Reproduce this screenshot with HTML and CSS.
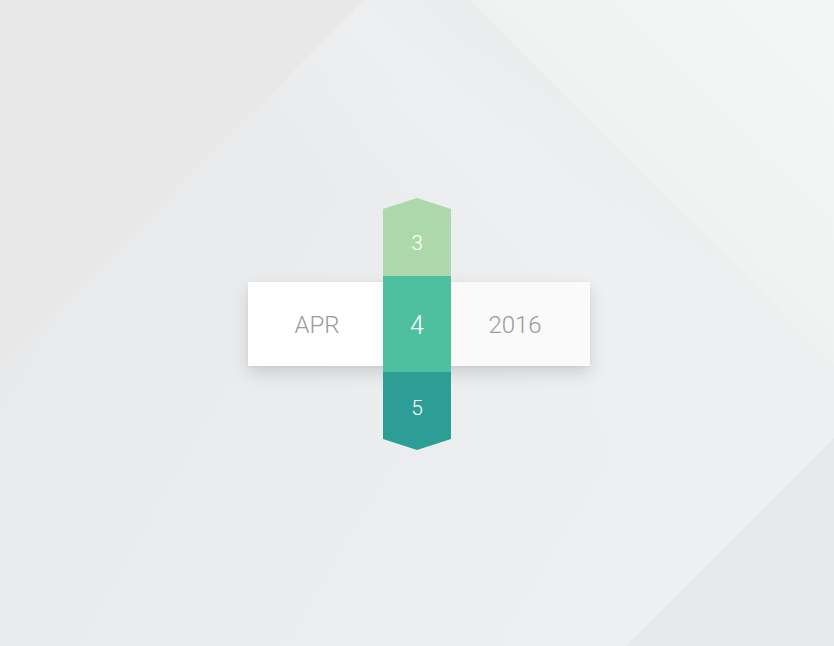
FILE: index.html
```html
<!DOCTYPE html>
<html lang="en">
<head>
<meta charset="utf-8">
<title>Date picker</title>
<link rel="stylesheet" href="styles.css">
</head>
<body>
<main class="stage">
  <div class="picker">
    <div class="panel panel-month"><span class="label">APR</span></div>
    <div class="day-column">
      <div class="cell cell-prev"><span>3</span></div>
      <div class="cell cell-current"><span>4</span></div>
      <div class="cell cell-next"><span>5</span></div>
    </div>
    <div class="panel panel-year"><span class="label">2016</span></div>
  </div>
</main>
</body>
</html>
```
FILE: styles.css
```css
html, body {
  margin: 0;
  padding: 0;
}

body {
  width: 834px;
  height: 646px;
  overflow: hidden;
  font-family: Roboto, "Noto Sans", "Liberation Sans", sans-serif;
  font-weight: 300;
  background:
    linear-gradient(135deg, #e8e8e8 258px, rgba(232,232,232,0) 258px),
    linear-gradient(135deg, rgba(232,233,235,0) 899px, #e8e9eb 899px),
    linear-gradient(45deg, rgba(242,243,243,0) 789px, #f0f1f1 789px, #f4f5f5 1000px),
    linear-gradient(45deg, rgba(239,240,241,0) 560px, rgba(239,240,241,0.8) 700px, rgba(239,240,241,0) 789px),
    linear-gradient(120deg, #e8e9ea 10%, #ebeced 45%, #eeeff0 80%);
}

.stage {
  width: 834px;
  height: 646px;
  display: flex;
  align-items: center;
  justify-content: center;
}

.picker {
  display: flex;
  align-items: center;
  height: 84px;
  margin-left: 4px;
  margin-top: 2px;
  box-shadow: 0 7px 16px rgba(0, 0, 0, 0.13), 0 1px 3px rgba(0, 0, 0, 0.05);
}

.panel {
  height: 84px;
  display: flex;
  align-items: center;
  justify-content: center;
  box-sizing: border-box;
  color: #9a9a9a;
  font-size: 24px;
  padding-top: 2px;
}

.panel-month {
  width: 135px;
  background: #ffffff;
  padding-left: 3px;
}

.panel-year {
  width: 139px;
  background: #fafafa;
  padding-right: 11px;
}

.day-column {
  width: 68px;
  height: 252px;
  display: flex;
  flex-direction: column;
  color: #ffffff;
}

.cell {
  display: flex;
  align-items: center;
  justify-content: center;
  box-sizing: border-box;
}

.cell-prev {
  height: 78px;
  padding-top: 11px;
  background: #add8ab;
  font-size: 21px;
  clip-path: polygon(50% 0, 100% 11px, 100% 100%, 0 100%, 0 11px);
}

.cell-current {
  height: 96px;
  padding-top: 2px;
  background: #4ec09f;
  font-size: 25px;
}

.cell-next {
  height: 78px;
  padding-bottom: 6px;
  background: #2c9e96;
  font-size: 21px;
  clip-path: polygon(0 0, 100% 0, 100% 67px, 50% 100%, 0 67px);
}
```
